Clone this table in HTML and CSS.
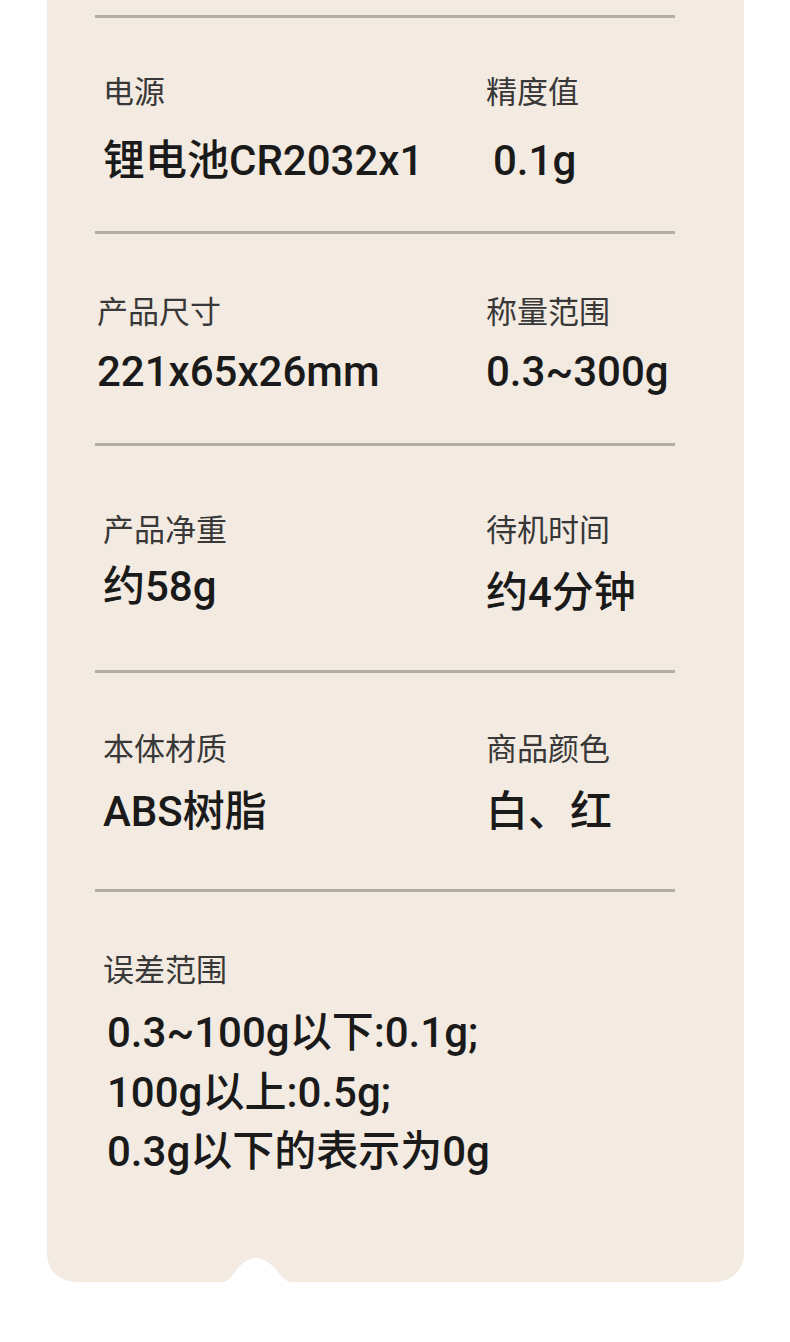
FILE: index.html
```html
<!DOCTYPE html>
<html lang="zh-CN">
<head>
  <meta charset="UTF-8">
  <meta name="viewport" content="width=device-width, initial-scale=1.0">
  <title>产品参数</title>
  <link rel="stylesheet" href="styles.css">
</head>
<body>
  <!-- 参数卡片 -->
  <div class="card">
    <div class="spec">
      <div class="cell">
        <p class="label">电源</p>
        <p class="value">锂电池CR2032x1</p>
      </div>
      <div class="cell">
        <p class="label">精度值</p>
        <p class="value value-indent">0.1g</p>
      </div>
    </div>

    <div class="spec">
      <div class="cell cell-left">
        <p class="label">产品尺寸</p>
        <p class="value">221x65x26mm</p>
      </div>
      <div class="cell">
        <p class="label">称量范围</p>
        <p class="value">0.3~300g</p>
      </div>
    </div>

    <div class="spec">
      <div class="cell">
        <p class="label">产品净重</p>
        <p class="value">约58g</p>
      </div>
      <div class="cell">
        <p class="label">待机时间</p>
        <p class="value value-low">约4分钟</p>
      </div>
    </div>

    <div class="spec">
      <div class="cell">
        <p class="label">本体材质</p>
        <p class="value">ABS树脂</p>
      </div>
      <div class="cell">
        <p class="label">商品颜色</p>
        <p class="value">白、红</p>
      </div>
    </div>

    <div class="spec spec-wide">
      <div class="cell">
        <p class="label">误差范围</p>
        <p class="value value-lines">0.3~100g以下:0.1g;<br>100g以上:0.5g;<br>0.3g以下的表示为0g</p>
      </div>
    </div>

    <!-- 底部小凸起 -->
    <svg class="notch" width="66" height="26" viewBox="0 0 66 26">
      <path d="M0 26 C4 25 7 22 11 16 C16 8 25 2 32 2 C39 2 48 8 54 16 C58 22 62 25 66 26 Z" fill="#fff"/>
    </svg>
  </div>
</body>
</html>
```

FILE: styles.css
```css
/* 基础 */
* { box-sizing: border-box; }
body {
  margin: 0;
  background: #fff;
  font-family: "Noto Sans CJK SC", sans-serif;
}
p { margin: 0; }

/* 卡片 */
.card {
  position: relative;
  width: 697px;
  height: 1282px;
  margin-left: 47px;
  padding: 15px 69px 0 48px;
  background: #f3ebe1;
  border-radius: 0 0 28px 28px;
}
.notch {
  position: absolute;
  left: 177px;
  bottom: 0;
  display: block;
}

/* 参数行 */
.spec {
  display: grid;
  grid-template-columns: 383px 1fr;
  padding-left: 8px;
  border-top: 3px solid #b4ada5;
}
.spec:nth-child(1) { height: 216px; padding-top: 52px; }
.spec:nth-child(2) { height: 212px; padding-top: 56px; }
.spec:nth-child(3) { height: 227px; padding-top: 62px; }
.spec:nth-child(4) { height: 219px; padding-top: 54px; }
.spec:nth-child(5) { padding-top: 56px; }
.spec-wide { grid-template-columns: 1fr; }

.label {
  font-size: 31px;
  line-height: 40px;
  color: #383838;
}
.value {
  font-family: Roboto, "Noto Sans CJK SC", sans-serif;
  font-size: 42px;
  line-height: 50px;
  font-weight: 500;
  color: #1a1a1a;
}
.spec:nth-child(1) .value { margin-top: 26px; }
.spec:nth-child(2) .value { margin-top: 17px; }
.spec:nth-child(3) .value { margin-top: 14px; }
.spec:nth-child(4) .value { margin-top: 20px; }

.cell-left { margin-left: -6px; }
.value-indent { padding-left: 7px; }
.spec:nth-child(3) .value-low { margin-top: 20px; }

.value-lines {
  margin-top: 15px;
  padding-left: 4px;
  line-height: 59.5px;
}
```
